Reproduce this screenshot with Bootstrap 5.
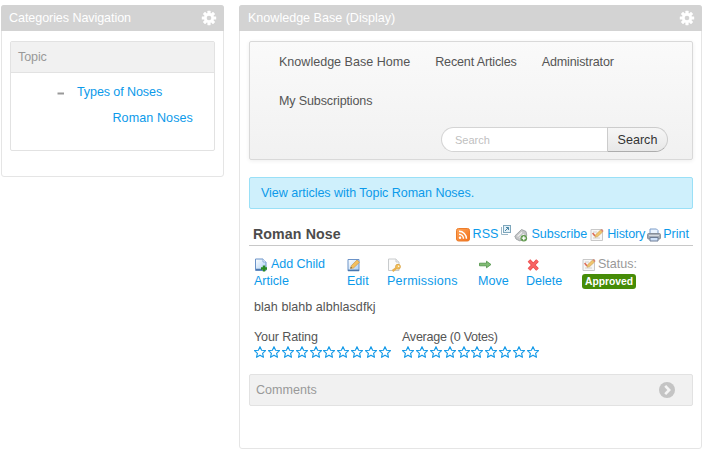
<!DOCTYPE html>
<html lang="en">
<head>
<meta charset="utf-8">
<meta name="viewport" content="width=device-width, initial-scale=1">
<title>Knowledge Base</title>
<link rel="stylesheet" href="https://cdn.jsdelivr.net/npm/bootstrap@5.3.0/dist/css/bootstrap.min.css">
<style>
body{font-family:"Liberation Sans",Arial,sans-serif;font-size:12.55px;line-height:17px;color:#555;background:#fff;overflow:hidden}
a{color:#0c9aea;text-decoration:none}
svg{display:block;flex:none}
.page-wrap{padding:5px 1px 0;gap:15px}
.portlet{border:1px solid #e5e5e5;border-radius:3px;padding:0 9px}
.portlet-nav{width:223px;height:172px}
.portlet-main{width:463px;height:444px}
.portlet-bar{height:26px;background:#d3d3d3;color:#fff;margin:-1px -10px 10px;padding:0 7px 0 8px;border-radius:3px 3px 0 0}
.portlet-bar svg{margin-top:-1px}
.portlet-main .portlet-bar{padding-left:9px}
.tight{letter-spacing:-.07px}
.panel-box{border:1px solid #e2e2e2;border-radius:2px;width:205px;height:110px;margin-left:-1px;letter-spacing:-.1px}
.panel-head{background:#f1f1f1;border-bottom:1px solid #e2e2e2;height:31px;padding:0 7px;color:#999}
.tree{padding-top:11px}
.tree-row{height:26px}
.tree-dash{margin-left:46px}
.tree-leaf{letter-spacing:.1px;margin-right:21px}
.kb-nav{height:119px;border:1px solid #d9d9d9;border-radius:2px;background:linear-gradient(#fafafa,#f1f1f1);box-shadow:0 1px 4px rgba(0,0,0,.07);margin-right:-1px}
.kb-nav .nav-link{color:#555;padding:12px 0 10px;line-height:17px}
.kb-nav .nav-link+.nav-link{letter-spacing:-.14px}
.kb-links{padding:0 60px 0 29px;column-gap:25px}
.kb-search{width:227px;height:25px;margin:7px 24px 0 auto}
.kb-search .form-control{font-size:11px;height:25px;border:1px solid #d4d4d4;border-right:0;border-radius:13px 0 0 13px;padding:0 13px;color:#555;font-family:inherit;min-height:0}
.kb-search .form-control::placeholder{color:#bfbfbf}
.kb-search .btn{font-size:12.55px;line-height:17px;flex:none;width:61px;padding:1px 0 0;height:25px;border:1px solid #ccc;border-bottom-color:#adadad;border-radius:0 13px 13px 0;color:#333;background:linear-gradient(#f6f6f6,#e8e8e8)}
.topic-note{height:32px;margin:17px -1px 0 0;padding:0 11px;background:#cff0fc;border:1px solid #9ae0f7;border-radius:2px;letter-spacing:-.05px}
.article-head{height:37px;margin-right:-1px;border-bottom:1px solid #c8c8c8;padding:11px 4px 0}
.article-title{font-size:14.2px;line-height:17px;font-weight:bold;margin:6px 0 0;color:#4c4c4c;letter-spacing:.1px}
.tool{gap:3px;height:17px;margin-top:6px}
.tool svg{margin-top:2px}
.popout{margin:5px 0 0 3px}
.subscribe{margin-left:3px}
.history{margin-left:3px;letter-spacing:-.15px}
.print{margin-left:2px;gap:2px}
.ic{width:14px;height:14px}
.actions{padding:10px 0 0 5px}
.act-a{width:93px}.act-b{width:40px}.act-c{width:91px}.act-d{width:48px}.act-e{width:56px}
.act-c{letter-spacing:.22px}
.act-ic{height:17px;padding-top:2px}
.act-ic .words{margin:-2px 0 0 3px}
.act-a .words{letter-spacing:-.05px}
.status{color:#999}
.status .words{margin-left:2px}
.ok-badge{display:inline-block;font-size:10.3px;line-height:15px;height:15px;background:#468c07;color:#fff;font-weight:bold;border-radius:3px;padding:0 3px;width:54px;margin-top:1px;white-space:nowrap}
.body-copy{padding:9px 0 0 5px;letter-spacing:.04px}
.ratings{margin:13px 0 0 5px;letter-spacing:-.27px}
.rate-a{width:148px}
.rate-label{letter-spacing:-.12px}
.stars{gap:1.9px}
.comment-box{height:32px;margin:16px -1px 0 0;border:1px solid #e2e2e2;border-radius:2px;background:#f1f1f1;color:#999;padding:0 17px 0 6px}
</style>
</head>
<body>
<svg width="0" height="0" class="position-absolute" aria-hidden="true">
<defs>
<linearGradient id="blueSheet" x2="1" y2="1"><stop stop-color="#fff"/><stop offset="1" stop-color="#a9cdf3"/></linearGradient>
<linearGradient id="orangeFill" x2="1" y2="1"><stop stop-color="#ffa65a"/><stop offset="1" stop-color="#f2711b"/></linearGradient>
<symbol id="gear" viewBox="0 0 16 16"><g fill="#fff"><rect x="6.4" y=".8" width="3.2" height="14.4" rx=".4"/><rect x="6.4" y=".8" width="3.2" height="14.4" rx=".4" transform="rotate(45 8 8)"/><rect x="6.4" y=".8" width="3.2" height="14.4" rx=".4" transform="rotate(90 8 8)"/><rect x="6.4" y=".8" width="3.2" height="14.4" rx=".4" transform="rotate(135 8 8)"/><circle cx="8" cy="8" r="5"/></g><circle cx="8" cy="8" r="2.3" fill="#d3d3d3"/></symbol>
<symbol id="star" viewBox="0 0 12 12"><path d="M6 .7 7.600 4.300 11.500 4.600 8.600 7.300 9.500 11.300 6 9.200 2.500 11.300 3.400 7.300 .5 4.600 4.400 4.300Z" fill="#fff" stroke="#159ae8" stroke-width="1.15" stroke-linejoin="round"/></symbol>
<symbol id="notepad" viewBox="0 0 14 14"><path d="M1 1.500H12.500V12.500H1Z" fill="#f7f7f7" stroke="#c9c9c9"/><path d="M3 4H7M3 10H10" stroke="#d2cfcc"/><path d="M2.600 5 5 8" stroke="#dd6a55" stroke-width="1.600"/><path d="M5 9.300 5.800 6.500 10.600 2 12.600 4 7.700 8.600Z" fill="#f0c56c" stroke="#c79a50" stroke-width=".6"/><path d="M10.600 2 11.700 1 13.600 2.900 12.600 4Z" fill="#d98270"/></symbol>
</defs>
</svg>
<div class="page-wrap d-flex align-items-start">
  <aside class="portlet portlet-nav">
    <div class="portlet-bar d-flex justify-content-between align-items-center"><span class="tight">Categories Navigation</span><svg width="16" height="16"><use href="#gear"/></svg></div>
    <div class="panel-box">
      <div class="panel-head d-flex align-items-center">Topic</div>
      <div class="tree">
        <div class="tree-row d-flex"><svg class="tree-dash" width="20" height="17" viewBox="0 0 20 17"><path d="M.5 9.500H7" stroke="#999" stroke-width="2"/></svg><a href="#">Types of Noses</a></div>
        <div class="tree-row d-flex justify-content-end"><a href="#" class="tree-leaf">Roman Noses</a></div>
      </div>
    </div>
  </aside>
  <main class="portlet portlet-main">
    <div class="portlet-bar d-flex justify-content-between align-items-center"><span>Knowledge Base (Display)</span><svg width="16" height="16"><use href="#gear"/></svg></div>
    <div class="kb-nav">
      <nav class="nav kb-links">
        <a class="nav-link" href="#">Knowledge Base Home</a><a class="nav-link" href="#">Recent Articles</a><a class="nav-link" href="#">Administrator</a><a class="nav-link" href="#">My Subscriptions</a>
      </nav>
      <form class="kb-search d-flex"><input class="form-control" type="text" placeholder="Search" aria-label="Search"><button class="btn" type="button">Search</button></form>
    </div>
    <div class="topic-note d-flex align-items-center"><a href="#">View articles with Topic Roman Noses.</a></div>
    <div class="article-head d-flex justify-content-between align-items-start">
      <h1 class="article-title">Roman Nose</h1>
      <div class="d-flex">
        <a href="#" class="tool d-flex"><svg class="ic" viewBox="0 0 14 14"><rect x=".5" y=".5" width="13" height="12.500" rx="2" fill="url(#orangeFill)" stroke="#ec7d2b"/><circle cx="4" cy="9.800" r="1.200" fill="#fff"/><path d="M3 6.300A4.500 4.500 0 0 1 7.500 10.800M3 3.300A7.500 7.500 0 0 1 10.500 10.800" fill="none" stroke="#fff" stroke-width="1.400"/></svg>RSS</a>
        <svg width="10" height="10" viewBox="0 0 10 10" class="popout"><path d="M.5 2V9.500H7" fill="none" stroke="#9cb8c8"/><rect x="2.500" y=".5" width="7" height="7" fill="#e4f1f8" stroke="#7ea7bc"/><path d="M4 6 7.500 2.500M5 2.500H7.500V5" fill="none" stroke="#4a86a5"/></svg>
        <a href="#" class="tool d-flex subscribe"><svg class="ic" viewBox="0 0 14 14"><path d="M.8 8 7.500 1.500 12 3.500 12.800 7.500 6 13 2 11Z" fill="#c3c5c6" stroke="#a3a7a9"/><path d="M3.500 8.500 8 4.300M5.500 10 10 6" stroke="#eee" stroke-width="1.200"/><circle cx="9.800" cy="10.200" r="3.300" fill="#629a50"/><path d="M9.800 8.200V12.200M7.800 10.200H11.800" stroke="#fff" stroke-width="1.300"/></svg>Subscribe</a>
        <a href="#" class="tool d-flex history"><svg class="ic"><use href="#notepad"/></svg>History</a>
        <a href="#" class="tool d-flex print"><svg class="ic" viewBox="0 0 14 14"><path d="M3 1H9.500L11 2.500V6H3Z" fill="#eaf4ff" stroke="#7b9cc9"/><rect x=".6" y="5.500" width="12.800" height="5.500" rx="1" fill="#a5adb7" stroke="#858d98"/><path d="M2 7.500H12" stroke="#d5dae0"/><path d="M3 9.500H11V13H3Z" fill="#cfe2fa" stroke="#6c7d96"/></svg>Print</a>
      </div>
    </div>
    <div class="actions d-flex">
      <a href="#" class="act-a"><span class="act-ic d-flex"><svg class="ic" viewBox="0 0 14 14"><path d="M1.500 1H9L12 4V12.500H1.500Z" fill="url(#blueSheet)" stroke="#6b93c8"/><path d="M9 1V4H12" fill="#fff" stroke="#89add8"/><path d="M2 11.500H8" stroke="#4a77af" stroke-width="1.500"/><path d="M10 7.500V13.500M7 10.500H13" stroke="#298b22" stroke-width="2.400"/></svg><span class="words">Add Child</span></span>Article</a>
      <a href="#" class="act-b"><span class="act-ic d-flex"><svg class="ic" viewBox="0 0 14 14"><path d="M1 1.500H12V12.800H1Z" fill="url(#blueSheet)" stroke="#6b93c8"/><path d="M1 12.300H12" stroke="#4a77af" stroke-width="1.400"/><path d="M3.500 10.500 4.300 7.700 10 2 12.500 4.300 6.500 10Z" fill="#f4bf5c" stroke="#c99a50" stroke-width=".7"/><path d="M3.500 10.500 3.900 9 5 10Z" fill="#333"/></svg></span>Edit</a>
      <a href="#" class="act-c"><span class="act-ic d-flex"><svg class="ic" viewBox="0 0 14 14"><path d="M1.500 1H9L12 4V12.500H1.500Z" fill="#fafafa" stroke="#c8cbcd"/><path d="M9 1V4H12" fill="#eee" stroke="#c8cbcd"/><circle cx="11" cy="8.700" r="2.400" fill="#f4c158" stroke="#dba74c"/><path d="M9.500 10 5.500 13" stroke="#e8b04e" stroke-width="2.200"/><circle cx="11.700" cy="8.200" r=".7" fill="#fff"/></svg></span>Permissions</a>
      <a href="#" class="act-d"><span class="act-ic d-flex"><svg class="ic" viewBox="0 0 14 14"><path d="M1.500 5.200H8.500V3.200L13 6.500 8.500 9.800V7.800H1.500Z" fill="#82bd76" stroke="#4c9045" stroke-width=".8"/></svg></span>Move</a>
      <a href="#" class="act-e"><span class="act-ic d-flex"><svg class="ic" viewBox="0 0 14 14"><path d="M3 2.500 11.500 11.500M11.500 2.500 3 11.500" stroke="#ea4a4a" stroke-width="3.600"/><path d="M3 2.500 11.500 11.500M11.500 2.500 3 11.500" stroke="#f86464" stroke-width="2"/></svg></span>Delete</a>
      <div class="status"><span class="act-ic d-flex"><svg class="ic"><use href="#notepad"/></svg><span class="words">Status:</span></span><span class="ok-badge">Approved</span></div>
    </div>
    <p class="body-copy mb-0">blah blahb albhlasdfkj</p>
    <div class="ratings d-flex">
      <div class="rate-a"><span class="rate-label">Your Rating</span>
        <div class="stars d-flex"><svg width="12" height="12"><use href="#star"/></svg><svg width="12" height="12"><use href="#star"/></svg><svg width="12" height="12"><use href="#star"/></svg><svg width="12" height="12"><use href="#star"/></svg><svg width="12" height="12"><use href="#star"/></svg><svg width="12" height="12"><use href="#star"/></svg><svg width="12" height="12"><use href="#star"/></svg><svg width="12" height="12"><use href="#star"/></svg><svg width="12" height="12"><use href="#star"/></svg><svg width="12" height="12"><use href="#star"/></svg></div>
      </div>
      <div>Average (0 Votes)
        <div class="stars d-flex"><svg width="12" height="12"><use href="#star"/></svg><svg width="12" height="12"><use href="#star"/></svg><svg width="12" height="12"><use href="#star"/></svg><svg width="12" height="12"><use href="#star"/></svg><svg width="12" height="12"><use href="#star"/></svg><svg width="12" height="12"><use href="#star"/></svg><svg width="12" height="12"><use href="#star"/></svg><svg width="12" height="12"><use href="#star"/></svg><svg width="12" height="12"><use href="#star"/></svg><svg width="12" height="12"><use href="#star"/></svg></div>
      </div>
    </div>
    <div class="comment-box d-flex justify-content-between align-items-center"><span>Comments</span><svg width="16" height="16" viewBox="0 0 16 16"><circle cx="8" cy="8" r="8" fill="#c4c4c4"/><path d="M6.200 3.800 10.200 8 6.200 12.200" fill="none" stroke="#f5f5f5" stroke-width="2.600"/></svg></div>
  </main>
</div>
<script src="https://cdn.jsdelivr.net/npm/bootstrap@5.3.0/dist/js/bootstrap.bundle.min.js"></script>
</body>
</html>
